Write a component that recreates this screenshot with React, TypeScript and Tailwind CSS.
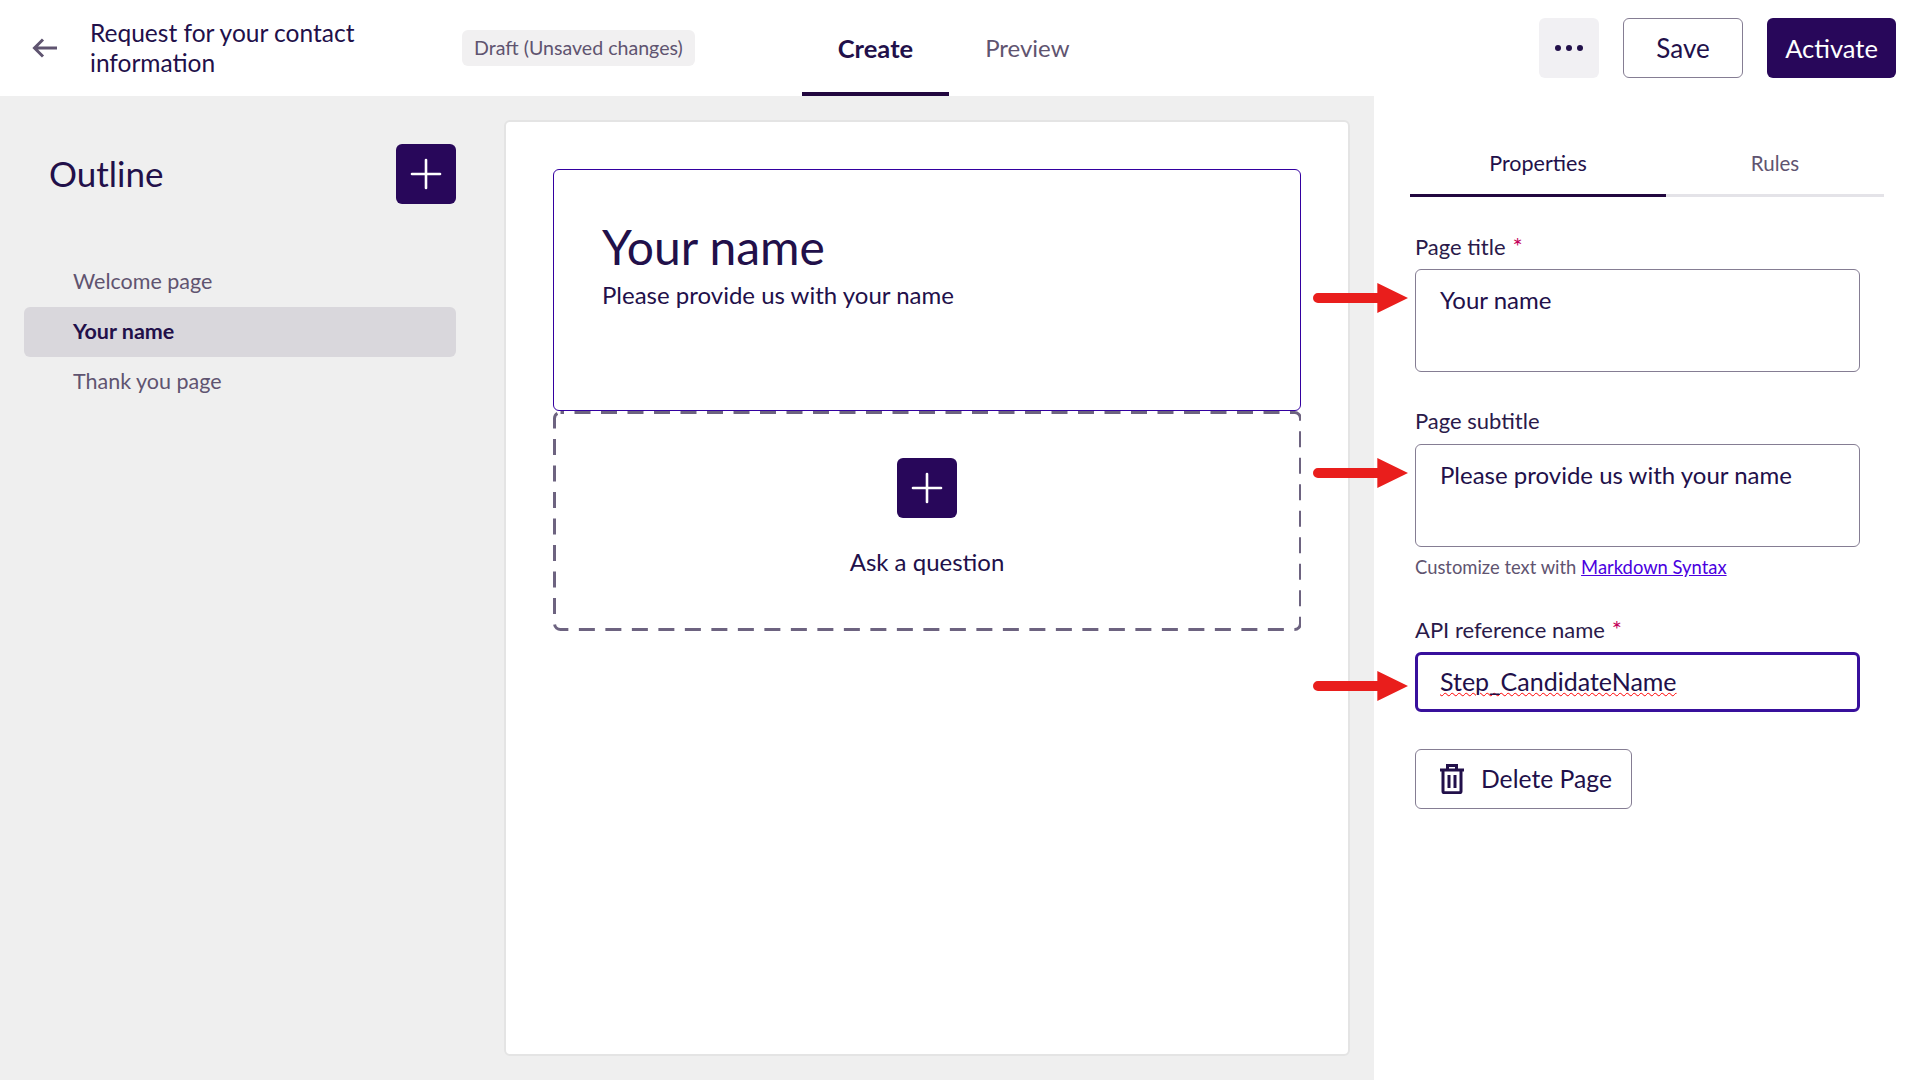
import { Plus } from "lucide-react";

const fontStack = "font-['Lato','Noto_Sans',sans-serif]";

const RedArrow = ({ className }: { className: string }) => (
    <svg className={`absolute left-[1313px] h-[30px] w-[95px] ${className}`} viewBox="0 0 96 30" preserveAspectRatio="none" aria-hidden>
        <path d="M5 10h60V0l31 15-31 15V20H5a5 5 0 0 1 0-10z" fill="#e91e1c" />
    </svg>
);

const BackArrow = () => (
    <svg className="h-[20px] w-[26px] shrink-0 text-[#5f5470]" viewBox="0 0 26 20" fill="none" stroke="currentColor" strokeWidth="3" aria-hidden>
        <path d="M25 10H3M11 1.5 2.5 10l8.500 8.500" />
    </svg>
);

const TrashIcon = () => (
    <svg className="h-[30px] w-[24px] shrink-0" viewBox="0 0 24 30" fill="none" stroke="currentColor" strokeWidth="3" aria-hidden>
        <path d="M0 6h24M7.500 5.500V1.500h9v4M3 6v21.500a1.200 1.200 0 0 0 1.200 1.200h15.600a1.200 1.200 0 0 0 1.200-1.200V6M9 11v13M15 11v13" />
    </svg>
);

const PlusButton = () => (
    <button className="flex h-[60px] w-[60px] shrink-0 items-center justify-center rounded-md bg-[#28075a] text-white">
        <Plus size={48} strokeWidth={1.3} />
    </button>
);

const Label = ({ text, required }: { text: string; required?: boolean }) => (
    <div className="mb-[9px] h-[26px] text-[22px] leading-[24px] text-[#2a1a4a]">
        {text}
        {required && <span className="ml-[7px] text-[24px] text-[#c4005a]">*</span>}
    </div>
);

const App = () => {
    const pages = ["Welcome page", "Your name", "Thank you page"];

    return (
        <div className={`relative flex h-[1080px] w-[1920px] flex-col overflow-hidden bg-white text-[#22104a] ${fontStack}`}>
            <header className="flex h-[96px] shrink-0 items-center pl-[32px] pr-[24px]">
                <BackArrow />
                <div className="ml-[32px] w-[300px] text-[24.500px] leading-[30px]">Request for your contact information</div>
                <div className="ml-[72px] flex h-[36px] items-center rounded-md bg-[#f1f0f1] px-[12px] text-[19.600px] text-[#5f5470]">
                    Draft (Unsaved changes)
                </div>
                <div className="ml-[107px] flex h-full">
                    <div className="flex h-full items-center border-b-4 border-[#22073f] px-[36px] pt-[4px] text-[25.500px] font-bold">Create</div>
                    <div className="flex h-full items-center px-[36px] text-[24px] text-[#5f5470]">Preview</div>
                </div>
                <div className="ml-auto flex items-center gap-[24px]">
                    <button className="flex h-[60px] w-[60px] items-center justify-center gap-[5px] rounded-md bg-[#f1f0f3]">
                        <span className="h-[6px] w-[6px] rounded-full bg-[#22104a]" />
                        <span className="h-[6px] w-[6px] rounded-full bg-[#22104a]" />
                        <span className="h-[6px] w-[6px] rounded-full bg-[#22104a]" />
                    </button>
                    <button className="h-[60px] w-[120px] rounded-md border border-[#857d93] text-[26px]">Save</button>
                    <button className="h-[60px] w-[129px] rounded-md bg-[#28075a] text-[25.500px] text-white">Activate</button>
                </div>
            </header>

            <div className="flex min-h-0 flex-1">
                <div className="flex w-[1374px] shrink-0 bg-[#efefef]">
                    <aside className="w-[504px] shrink-0 pl-[24px] pr-[48px] pt-[48px]">
                        <div className="flex items-center justify-between pl-[25px]">
                            <h2 className="pb-[2px] text-[35px] font-normal">Outline</h2>
                            <PlusButton />
                        </div>
                        <ul className="mt-[53px]">
                            {pages.map((page) => (
                                <li
                                    key={page}
                                    className={
                                        page === "Your name"
                                            ? "flex h-[50px] items-center rounded-md bg-[#d9d7dc] pb-[2px] pl-[49px] text-[21.500px] font-bold"
                                            : "flex h-[50px] items-center pb-[2px] pl-[49px] text-[21.500px] text-[#5f5470]"
                                    }
                                >
                                    {page}
                                </li>
                            ))}
                        </ul>
                    </aside>

                    <main className="mb-[24px] mt-[24px] w-[846px] rounded-md border-2 border-[#e4e4e4] bg-white px-[47px] pt-[47px]">
                        <section className="relative z-10 h-[242px] rounded-md border border-[#3300a0] pl-[48px] pt-[45px]">
                            <h1 className="text-[48px] font-normal leading-[64px]">Your name</h1>
                            <p className="mt-[1px] text-[24px] leading-[30px]">Please provide us with your name</p>
                        </section>
                        <section className="relative flex h-[220px] flex-col items-center pt-[47px]">
                            <svg className="absolute inset-0 h-full w-full" fill="none" aria-hidden>
                                <rect x="1.5" y="1.5" width="746" height="217" rx="6" stroke="#6d6380" strokeWidth="3" strokeDasharray="16 10.500" strokeDashoffset="12.500" />
                            </svg>
                            <PlusButton />
                            <div className="mt-[29px] text-[24px] leading-[30px]">Ask a question</div>
                        </section>
                    </main>
                </div>

                <aside className="min-w-0 flex-1 pl-[36px] pr-[36px]">
                    <div className="flex h-[101px] items-end">
                        <div className="flex h-[71px] w-[256px] items-start justify-center border-b-[3px] border-[#22073f] pt-[21px] text-[21.500px] leading-[32px]">Properties</div>
                        <div className="flex h-[71px] w-[218px] items-start justify-center border-b-[3px] border-[#e4e3e8] pt-[21px] text-[20.500px] leading-[32px] text-[#5f5470]">Rules</div>
                    </div>
                    <div className="w-[450px] pl-[5px] pt-[37px]">
                        <Label text="Page title" required />
                        <div className="h-[103px] rounded-md border border-[#857d93] px-[24px] pt-[15px] text-[24px] leading-[30px]">Your name</div>

                        <div className="mt-[37px]" />
                        <Label text="Page subtitle" />
                        <div className="h-[103px] rounded-md border border-[#857d93] px-[24px] pt-[15px] text-[24px] leading-[30px]">Please provide us with your name</div>
                        <div className="mt-[8px] h-[24px] text-[18.400px] leading-[24px] text-[#5f5470]">
                            Customize text with <a className="text-[#4a00e0] underline">Markdown Syntax</a>
                        </div>

                        <div className="mt-[38px]" />
                        <Label text="API reference name" required />
                        <div className="flex h-[60px] items-center rounded-md border-[3px] border-[#38109c] px-[22px] text-[25px]">
                            <span className="underline decoration-[#ff0000] decoration-wavy decoration-1">Step_CandidateName</span>
                        </div>

                        <button className="mt-[37px] flex h-[60px] w-[217px] items-center gap-[17px] rounded-md border border-[#857d93] pl-[24px] text-[24.700px]">
                            <TrashIcon />
                            Delete Page
                        </button>
                    </div>
                </aside>
            </div>

            <RedArrow className="top-[283px]" />
            <RedArrow className="top-[458px]" />
            <RedArrow className="top-[671px]" />
        </div>
    );
};

export default App;
